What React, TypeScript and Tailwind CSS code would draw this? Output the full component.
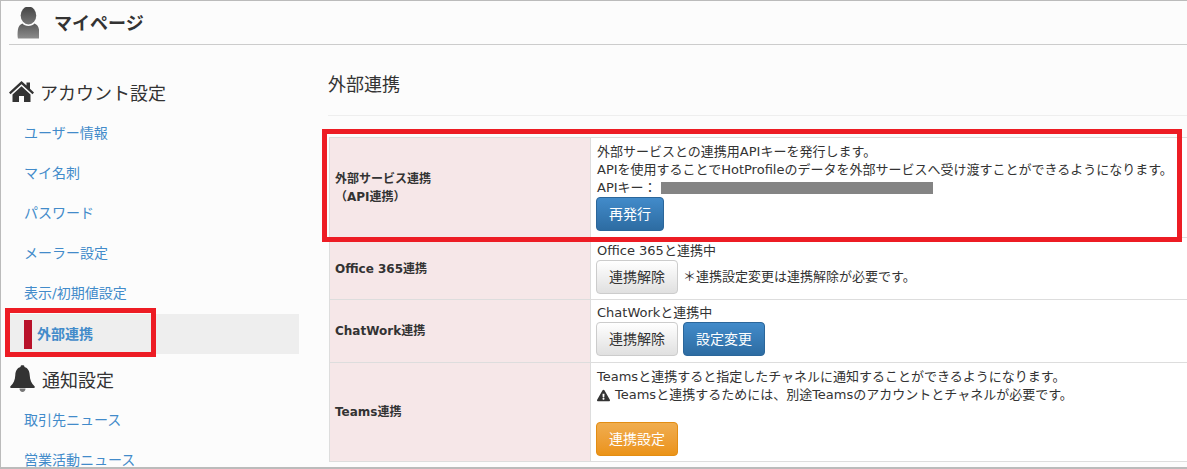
import React from 'react';
import { FaExclamationTriangle } from 'react-icons/fa';

const ACCOUNT_LINKS = ['ユーザー情報', 'マイ名刺', 'パスワード', 'メーラー設定', '表示/初期値設定'];
const NOTICE_LINKS = ['取引先ニュース', '営業活動ニュース'];

const btnBase = 'h-[34px] rounded border text-sm leading-none flex items-center justify-center';
const btnBlue = `${btnBase} border-[#2b669a] bg-gradient-to-b from-[#428bca] to-[#2d6ca2] text-white`;
const btnWhite = `${btnBase} border-[#ccc] bg-gradient-to-b from-white to-[#e0e0e0] text-[#333]`;
const btnOrange = `${btnBase} border-[#e38d13] bg-gradient-to-b from-[#f0ad4e] to-[#eb9316] text-white`;

function UserIcon() {
    return (
        <svg width="22" height="32" viewBox="0 0 24 34" preserveAspectRatio="none">
            <defs>
                <linearGradient id="headFill" x1="0" y1="0" x2="0" y2="1">
                    <stop offset="0" stopColor="#444" />
                    <stop offset="1" stopColor="#777" />
                </linearGradient>
                <linearGradient id="userFill" x1="0" y1="0" x2="0" y2="1">
                    <stop offset="0" stopColor="#5a5a5a" />
                    <stop offset="1" stopColor="#8c8c8c" />
                </linearGradient>
            </defs>
            <ellipse cx="12.500" cy="9" rx="8.500" ry="9.500" fill="url(#headFill)" />
            <path d="M6 17.500c2 3.500 11 3.500 13 0 3 1 4.500 3 5 6.500.4 3 .4 6 0 9.500H1c-.6-3-.5-6 0-9.500.6-3.500 2-5.500 5-6.500z" fill="url(#userFill)" />
        </svg>
    );
}

function HomeIcon() {
    return (
        <svg width="25" height="21" viewBox="0 0 25 21" fill="#333">
            <path d="M12.500 0L0 11.500l1.500 1.700L12.500 3.200l11 10 1.500-1.700-4-3.700V1.500h-3.500v3L12.500 0z" />
            <path d="M12.500 5.200L3.500 13.400V21h6.500v-6h5v6h6.500v-7.600l-9-8.200z" />
        </svg>
    );
}

function BellIcon() {
    return (
        <svg width="25" height="27" viewBox="0 0 25 27">
            <path d="M12.500 0c-1.300 0-2 .8-2 2-3.500 1-5 4-5.200 8-.2 5-1.800 8.500-4.800 11.300-.6.600-.3 1.700.8 1.700h22.400c1.100 0 1.400-1.100.8-1.700-3-2.800-4.600-6.300-4.800-11.300-.2-4-1.700-7-5.200-8 0-1.200-.7-2-2-2z" fill="#333" />
            <path d="M9.500 23.500c0 2 1.300 3.500 3 3.500s3-1.500 3-3.500h-6z" fill="#777" />
        </svg>
    );
}

function SideLink({ label }: { label: string }) {
    return <a className="h-10 flex items-center pl-4 text-sm text-[#428bca]">{label}</a>;
}

function Label({ children }: { children: React.ReactNode }) {
    return (
        <td className="w-[261px] bg-[#f6e7e8] border border-[#ddd] px-[5px] text-xs font-bold text-[#333] leading-[18px]">
            {children}
        </td>
    );
}

export default function App() {
    return (
        <div
            className="relative w-[1187px] h-[469px] overflow-hidden bg-[#fcfcfc] border-l border-t border-b-2 border-[#bbb] text-[#333]"
            style={{ fontFamily: '"DejaVu Sans", "Noto Sans CJK JP", sans-serif' }}
        >
            <header className="ml-2 h-[44px] border-b border-[#ccc] flex items-center">
                <div className="ml-2 mt-px">
                    <UserIcon />
                </div>
                <h1 className="ml-[15px] pt-[2px] text-lg font-bold">マイページ</h1>
            </header>

            <div className="flex">
                <aside className="ml-[7px] w-[291px] shrink-0 pt-[28px]">
                    <div className="h-[40px] pt-[2px] flex items-center text-lg">
                        <span className="ml-[1px] mr-[6px] mb-[5px]">
                            <HomeIcon />
                        </span>
                        アカウント設定
                    </div>
                    <nav className="flex flex-col">
                        {ACCOUNT_LINKS.map((label) => (
                            <SideLink key={label} label={label} />
                        ))}
                        <a className="mt-[1px] h-10 bg-[#eee] flex items-center pl-4 text-sm font-bold text-[#428bca]">
                            <span className="w-2 h-[29px] bg-[#b9122a] mr-[5px]" />
                            外部連携
                        </a>
                    </nav>
                    <div className="mt-[6px] h-10 pt-[2px] flex items-center text-lg">
                        <span className="ml-[2px] mr-[7px] mb-[6px]">
                            <BellIcon />
                        </span>
                        通知設定
                    </div>
                    {NOTICE_LINKS.map((label) => (
                        <SideLink key={label} label={label} />
                    ))}
                </aside>

                <main className="ml-[30px] flex-1">
                    <h2 className="h-[71px] pt-[26px] border-b border-[#eee] text-lg leading-[28px] -ml-px">外部連携</h2>
                    <table className="mt-[21px] w-[870px] border-collapse text-[13px] leading-[18px] bg-white">
                        <tbody>
                            <tr className="h-[100px]">
                                <Label>
                                    外部サービス連携
                                    <br />
                                    （API連携）
                                </Label>
                                <td className="border border-[#ddd] px-[5px] align-top pt-[5px]">
                                    <p className="pl-px">外部サービスとの連携用APIキーを発行します。</p>
                                    <p className="pl-px">APIを使用することでHotProfileのデータを外部サービスへ受け渡すことができるようになります。</p>
                                    <p className="pl-px flex items-center">
                                        APIキー：
                                        <span className="ml-[4px] w-[272px] h-3 bg-[#848484]" />
                                    </p>
                                    <button className={`${btnBlue} w-[68px]`}>再発行</button>
                                </td>
                            </tr>
                            <tr className="h-[62px]">
                                <Label>Office 365連携</Label>
                                <td className="border border-[#ddd] px-[5px] align-top pt-[4px]">
                                    <p className="pl-px">Office 365と連携中</p>
                                    <div className="flex items-center gap-[5px]">
                                        <button className={`${btnWhite} w-[82px]`}>連携解除</button>
                                        <span>＊連携設定変更は連携解除が必要です。</span>
                                    </div>
                                </td>
                            </tr>
                            <tr className="h-[63px]">
                                <Label>ChatWork連携</Label>
                                <td className="border border-[#ddd] px-[5px] align-top pt-[4px]">
                                    <p className="pl-px">ChatWorkと連携中</p>
                                    <div className="flex gap-[5px]">
                                        <button className={`${btnWhite} w-[82px]`}>連携解除</button>
                                        <button className={`${btnBlue} w-[82px]`}>設定変更</button>
                                    </div>
                                </td>
                            </tr>
                            <tr className="h-[99px]">
                                <Label>Teams連携</Label>
                                <td className="border border-[#ddd] px-[5px] align-top pt-[5px]">
                                    <p className="pl-px">Teamsと連携すると指定したチャネルに通知することができるようになります。</p>
                                    <p className="pl-px flex items-center">
                                        <FaExclamationTriangle className="text-[13px] mr-[5px]" />
                                        Teamsと連携するためには、別途Teamsのアカウントとチャネルが必要です。
                                    </p>
                                    <button className={`${btnOrange} w-[82px] mt-[18px]`}>連携設定</button>
                                </td>
                            </tr>
                        </tbody>
                    </table>
                </main>
            </div>

            {/* 赤枠の注釈 */}
            <div className="absolute left-[4px] top-[307px] w-[151px] h-[49px] border-[5px] border-[#ed1c24]" />
            <div className="absolute left-[321px] top-[128px] w-[860px] h-[113px] border-[5px] border-[#ed1c24]" />
        </div>
    );
}
